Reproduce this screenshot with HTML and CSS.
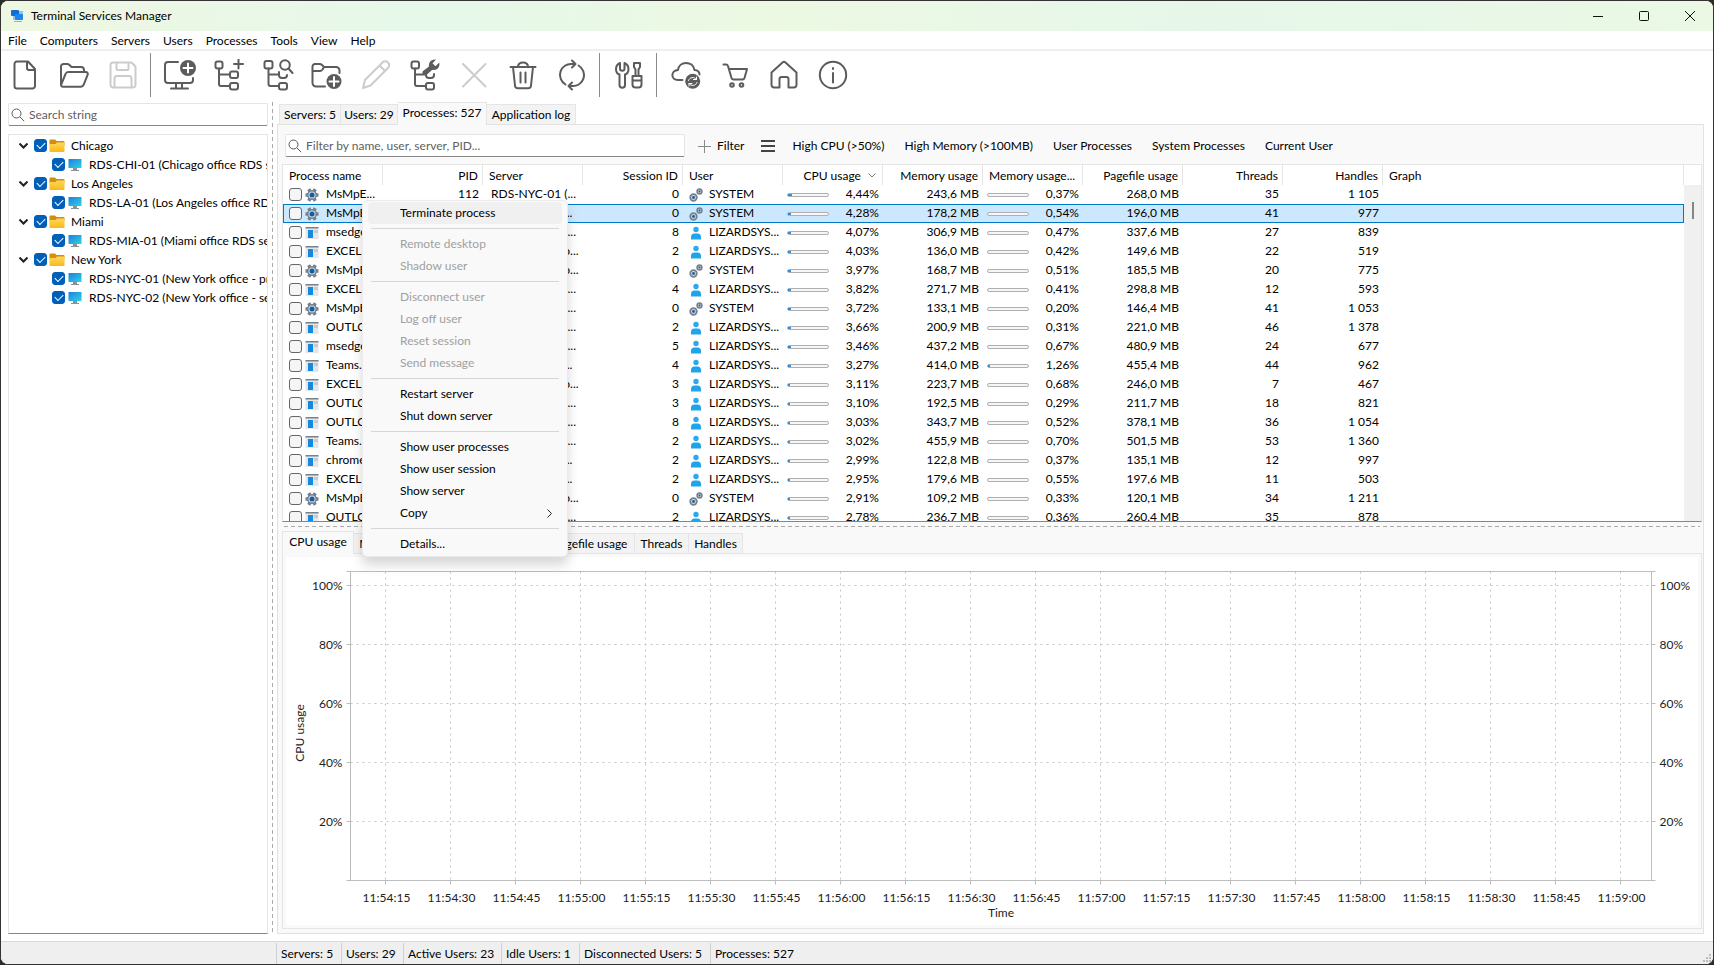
FILE: index.html
```html
<!DOCTYPE html>
<html lang="en">
<head>
    <meta charset="UTF-8">
    <meta name="viewport" content="width=device-width, initial-scale=1.0">
    <title>Terminal Services Manager</title>
    <link rel="stylesheet" href="styles.css">
</head>
<body>
    <svg class="sprite">
        <defs>
            <linearGradient id="screenFill" x1="0" y1="0" x2="1" y2="1">
                <stop offset="0" stop-color="#1f7fe0"/>
                <stop offset="1" stop-color="#2bd4e0"/>
            </linearGradient>
            <linearGradient id="folderFill" x1="0" y1="0" x2="0" y2="1">
                <stop offset="0" stop-color="#ffd75e"/>
                <stop offset="1" stop-color="#f9b916"/>
            </linearGradient>
        </defs>
        <symbol id="search" viewBox="0 0 14 14">
            <circle cx="5.5" cy="5.5" r="4.5"/>
            <path d="M9 9l4.2 4.2"/>
        </symbol>
        <symbol id="folder" viewBox="0 0 16 14">
            <path d="M.5 1.5A1 1 0 0 1 1.500.5h4.500l1.500 1.500h7a1 1 0 0 1 1 1V6H.5z" fill="#d08f0c"/>
            <path d="M.5 5h6L8 3.500h7.500V12a1 1 0 0 1-1 1h-13a1 1 0 0 1-1-1z" fill="url(#folderFill)"/>
        </symbol>
        <symbol id="screen" viewBox="0 0 14 14">
            <rect x=".5" y="1" width="13" height="9" rx=".5" fill="url(#screenFill)"/>
            <path d="M5 10h4v2h2v1H3v-1h2z" fill="#8a9299"/>
        </symbol>
        <symbol id="gear" viewBox="0 0 14 14">
            <g stroke="#76828e" stroke-width="3.500">
                <path d="M3.700 1.200l6.600 11.600M10.300 1.200L3.700 12.800M.5 7h13"/>
            </g>
            <circle cx="7" cy="7" r="5" fill="#76828e"/>
            <circle cx="7" cy="7" r="3.500" fill="#d5dbe1"/>
            <circle cx="7" cy="7" r="2.500" fill="#0f5ea8"/>
        </symbol>
        <symbol id="app" viewBox="0 0 14 14">
            <rect x=".5" y="1" width="13" height="12" fill="#e3e5e7"/>
            <rect x=".5" y="1" width="13" height="1.500" fill="#76828e"/>
            <rect x="3" y="4" width="5" height="8" fill="#1589e0"/>
            <rect x="9" y="4" width="4" height="3" fill="#c9cccf"/>
        </symbol>
        <symbol id="person" viewBox="0 0 14 14">
            <circle cx="7" cy="3.500" r="2.700" fill="#2ba9ee"/>
            <path d="M2 13.500V11a3.500 3.500 0 0 1 3.500-3.500h3A3.500 3.500 0 0 1 12 11v2.500z" fill="#1fa4ea"/>
        </symbol>
        <symbol id="gears" viewBox="0 0 14 14">
            <circle cx="4.500" cy="9.500" r="3.300" fill="#d5dbe1" stroke="#76828e" stroke-width="1.800"/>
            <circle cx="4.500" cy="9.500" r="1.400" fill="#0f5ea8"/>
            <circle cx="10.500" cy="3.500" r="2.400" fill="#d5dbe1" stroke="#76828e" stroke-width="1.600"/>
            <circle cx="10.500" cy="3.500" r="1" fill="#0f5ea8"/>
        </symbol>
    </svg>

    <div class="window">
        <header class="titlebar">
            <svg class="app-icon" viewBox="0 0 14 14">
                <rect x="3" y="2" width="10" height="9" fill="#8cc4f5"/>
                <rect x="1" y="1" width="8" height="6" rx="1" fill="#0f6fd0"/>
                <rect x="5" y="5" width="8" height="6" rx="1" fill="#1c86ea"/>
                <path d="M4 12h8v1H4z" fill="#a3abb3"/>
            </svg>
            <span class="caption">Terminal Services Manager</span>
            <div class="window-buttons">
                <button aria-label="Minimize"><svg viewBox="0 0 12 12"><path d="M1 6.500h10"/></svg></button>
                <button aria-label="Maximize"><svg viewBox="0 0 12 12"><rect x="1.500" y="1.500" width="9" height="9" rx="1"/></svg></button>
                <button aria-label="Close"><svg viewBox="0 0 12 12"><path d="M1 1l10 10M11 1L1 11"/></svg></button>
            </div>
        </header>

        <nav class="menubar">
            <button>File</button>
            <button>Computers</button>
            <button>Servers</button>
            <button>Users</button>
            <button>Processes</button>
            <button>Tools</button>
            <button>View</button>
            <button>Help</button>
        </nav>

        <div class="toolbar">
            <button aria-label="New"><svg viewBox="0 0 32 32"><path d="M8 2.500h11l7 7.500v17a2.500 2.500 0 0 1-2.500 2.500H8A2.500 2.500 0 0 1 5.500 27V5A2.500 2.500 0 0 1 8 2.500zM18 3v6a2 2 0 0 0 2 2h6"/></svg></button>
            <button aria-label="Open"><svg viewBox="0 0 32 32"><path d="M3 26V7.500A2.500 2.500 0 0 1 5.500 5H9q1.500 0 2.500 1l2 2h9.500a3 3 0 0 1 3 3v2M3 26l4.500-11a3 3 0 0 1 2.800-2h17.500a2 2 0 0 1 1.900 2.700l-4 10a3 3 0 0 1-2.800 2H5a2 2 0 0 1-2-1.700z"/></svg></button>
            <button aria-label="Save" disabled><svg viewBox="0 0 32 32"><path d="M6 3.500h18.500l4 4V26a2.500 2.500 0 0 1-2.500 2.500H6A2.500 2.500 0 0 1 3.500 26V6A2.500 2.500 0 0 1 6 3.500zM9.500 3.500v6A1.500 1.500 0 0 0 11 11h9a1.500 1.500 0 0 0 1.500-1.500v-6M7.500 28.500v-9A2.500 2.500 0 0 1 10 17h12a2.500 2.500 0 0 1 2.500 2.500v9"/></svg></button>
            <span class="separator"></span>
            <button aria-label="Add computer"><svg viewBox="0 0 32 32"><path d="M14 3H4a3 3 0 0 0-3 3v15a3 3 0 0 0 3 3h22a3 3 0 0 0 3-3v-2M12 24v5M18 24v5M7 29.500h17"/><circle class="solid" cx="24" cy="9" r="8"/><path class="knockout" d="M24 4.500v9M19.500 9h9"/></svg></button>
            <button aria-label="Add group"><svg viewBox="0 0 32 32"><rect x="2.500" y="2.500" width="7" height="7" rx="2"/><rect x="17" y="12.500" width="8" height="6.500" rx="2"/><rect x="17" y="24" width="8" height="6.500" rx="2"/><path d="M6 9.500V25a2 2 0 0 0 2 2h9M6 15.500h11M25.500.5v9M21 5h9"/></svg></button>
            <button aria-label="Find computers"><svg viewBox="0 0 32 32"><rect x="2.500" y="2" width="8" height="7.500" rx="2"/><path d="M17 13v3a3 3 0 0 0 3 3h2a3 3 0 0 0 3-3"/><rect x="17" y="24" width="8" height="6.500" rx="2"/><path d="M6.500 9.500V25a2 2 0 0 0 2 2H17M6.500 15.500H17"/><circle cx="23" cy="6" r="4.800"/><path d="M26.500 9.500l4 4.500"/></svg></button>
            <button aria-label="Add folder"><svg viewBox="0 0 32 32"><path d="M14 27.500H5a3.500 3.500 0 0 1-3.500-3.500V7.500A2.500 2.500 0 0 1 4 5h4.500q1.500 0 2.500 1l2 2h12a3.500 3.500 0 0 1 3.500 3.500V14M1.500 12H9q1.500 0 2.500-1.500L13 8"/><circle class="solid" cx="23" cy="22.500" r="7.500"/><path class="knockout" d="M23 18v9M18.500 22.500h9"/></svg></button>
            <button aria-label="Edit" disabled><svg viewBox="0 0 32 32"><path d="M3 29l2-8L22.500 3.500a3.800 3.800 0 0 1 5.500 5.500L10.500 26.500zM19.500 6.500l5.500 5.500"/></svg></button>
            <button aria-label="Configure group"><svg viewBox="0 0 32 32"><rect x="2.500" y="2.500" width="7.500" height="7" rx="2"/><path d="M17 14v2a3 3 0 0 0 3 3h2a3 3 0 0 0 3-3v-1"/><rect x="17" y="24" width="8" height="6.500" rx="2"/><path d="M6 9.500V25a2 2 0 0 0 2 2h9M6 15.500h11"/><path class="solid" d="M14 12l6-4.500c-.6-4 2-7.500 7-7L23.500 4.200l3 3L30.300 3.500c1 5-2.800 8.300-7 7.300L18 15.500c-2.500 2-6-1.500-4-3.500z"/></svg></button>
            <button aria-label="Cancel" disabled><svg viewBox="0 0 32 32"><path d="M5 5l22.500 22.500M27.500 5L5 27.500"/></svg></button>
            <button aria-label="Delete"><svg viewBox="0 0 32 32"><path d="M3.500 8h25M11 8q0-4.500 5-4.500T21 8M6 8l2 18.500a3 3 0 0 0 3 2.800h10a3 3 0 0 0 3-2.800L26 8M13.500 13.500v10M18.500 13.500v10"/></svg></button>
            <button aria-label="Refresh"><svg viewBox="0 0 32 32"><path d="M9.500 25.500A11 11 0 0 1 16 5h3.500M22.500 6.500A11 11 0 0 1 16 27h-3.500M16 1.500L19.500 5 16 8.500M16 23.500L12.500 27l3.500 3.500"/></svg></button>
            <span class="separator"></span>
            <button aria-label="Options"><svg viewBox="0 0 32 32"><path d="M7 4C1.500 6.500 2 14 6.500 15.500V26a2.500 2.500 0 0 0 5.500 0V15.500C16.500 14 17 6.500 11.500 4v5.500a2.200 2.200 0 0 1-4.500 0zM21 4h6v4l-1.500 2.500V17h-3v-6.500L21 8zM19.500 17h9v8.500a3 3 0 0 1-3 3h-3a3 3 0 0 1-3-3zM19.500 21.500h9"/></svg></button>
            <span class="separator"></span>
            <button aria-label="Check for updates"><svg viewBox="0 0 32 32"><path d="M12.500 21H8C.5 21 .5 11.500 8 11c1-9.500 15-9.500 16.500 0 3 .3 5 2 5 4.500"/><circle class="solid" cx="22.700" cy="22.300" r="7.500"/><path class="knockout thin" d="M18.500 21.500c1-3.500 6-4 8-1v-2.500M26.500 20.500h-3M27 23.500c-1 3.500-6 4-8 1V27M19 24.500h3"/></svg></button>
            <button aria-label="Buy"><svg viewBox="0 0 32 32"><path d="M4.500 5.500H7q1.500 0 2 1.500l3.500 12q.5 1.500 2 1.500h9q1.500 0 2-1.500l2.500-9H10"/><circle cx="13" cy="26" r="1.800"/><circle cx="22.500" cy="26" r="1.800"/></svg></button>
            <button aria-label="Home page"><svg viewBox="0 0 32 32"><path d="M3.500 13.500L14.500 3.500q1.500-1.500 3 0l11 10V26a2.500 2.500 0 0 1-2.500 2.500h-5.500V20a2 2 0 0 0-2-2h-5a2 2 0 0 0-2 2v8.500H6A2.500 2.500 0 0 1 3.500 26z"/></svg></button>
            <button aria-label="About"><svg viewBox="0 0 32 32"><circle cx="16" cy="16" r="13.200"/><path d="M16 14v9.500M16 9v1"/></svg></button>
        </div>

        <main class="workspace">
            <aside class="sidebar">
                <label class="searchbox">
                    <svg class="glyph"><use href="#search"/></svg>
                    <input type="text" placeholder="Search string" aria-label="Search string">
                </label>
                <ul class="tree" id="tree"></ul>
            </aside>

            <div class="splitter-v"></div>

            <section class="content">
                <div class="tabs">
                    <button class="tab tab-servers">Servers: 5</button>
                    <button class="tab tab-users">Users: 29</button>
                    <button class="tab tab-processes active">Processes: 527</button>
                    <button class="tab tab-log">Application log</button>
                </div>

                <div class="page">
                    <div class="filterbar">
                        <label class="searchbox filter">
                            <svg class="glyph"><use href="#search"/></svg>
                            <input type="text" placeholder="Filter by name, user, server, PID..." aria-label="Filter">
                        </label>
                        <button class="add-filter"><svg viewBox="0 0 13 13"><path d="M6.500 0v13M0 6.500h13"/></svg>Filter</button>
                        <button class="burger" aria-label="Filter list"><svg viewBox="0 0 14 12"><path d="M0 1h14M0 6h14M0 11h14"/></svg></button>
                        <button>High CPU (&gt;50%)</button>
                        <button>High Memory (&gt;100MB)</button>
                        <button>User Processes</button>
                        <button>System Processes</button>
                        <button>Current User</button>
                    </div>

                    <div class="list">
                        <table>
                            <thead>
                                <tr>
                                    <th>Process name</th>
                                    <th class="num">PID</th>
                                    <th>Server</th>
                                    <th class="num">Session ID</th>
                                    <th>User</th>
                                    <th class="num">CPU usage <svg class="sort" viewBox="0 0 8 5"><path d="M.5.5L4 4 7.500.5"/></svg></th>
                                    <th class="num">Memory usage</th>
                                    <th>Memory usage...</th>
                                    <th class="num">Pagefile usage</th>
                                    <th class="num">Threads</th>
                                    <th class="num">Handles</th>
                                    <th class="graph">Graph</th>
                                </tr>
                            </thead>
                            <tbody id="processes"></tbody>
                        </table>
                        <div class="scrollbar"><div class="thumb"></div></div>
                    </div>

                    <div class="splitter-h"></div>

                    <div class="tabs lower">
                        <button class="tab tab-cpu active">CPU usage</button>
                        <button class="tab tab-memory">Memory usage</button>
                        <button class="tab tab-percent">Memory usage, %</button>
                        <button class="tab tab-pagefile">Pagefile usage</button>
                        <button class="tab tab-threads">Threads</button>
                        <button class="tab tab-handles">Handles</button>
                    </div>
                    <div class="chart-page">
                        <svg class="chart" id="chart"></svg>
                    </div>
                </div>
            </section>
        </main>

        <footer class="statusbar">
            <span></span>
            <span>Servers: 5</span>
            <span>Users: 29</span>
            <span>Active Users: 23</span>
            <span>Idle Users: 1</span>
            <span>Disconnected Users: 5</span>
            <span>Processes: 527</span>
            <svg class="grip" viewBox="0 0 8 8"><path d="M6 0h2v2H6zM3 3h2v2H3zM6 3h2v2H6zM0 6h2v2H0zM3 6h2v2H3zM6 6h2v2H6z"/></svg>
        </footer>

        <div class="context-menu">
            <button class="hover">Terminate process</button>
            <hr>
            <button disabled>Remote desktop</button>
            <button disabled>Shadow user</button>
            <hr>
            <button disabled>Disconnect user</button>
            <button disabled>Log off user</button>
            <button disabled>Reset session</button>
            <button disabled>Send message</button>
            <hr>
            <button>Restart server</button>
            <button>Shut down server</button>
            <hr>
            <button>Show user processes</button>
            <button>Show user session</button>
            <button>Show server</button>
            <button>Copy <svg viewBox="0 0 5 9"><path d="M.5.5l4 4-4 4"/></svg></button>
            <hr>
            <button>Details...</button>
        </div>
    </div>

    <script src="script.js"></script>
</body>
</html>
```
FILE: styles.css
```css
* {
    box-sizing: border-box;
}
body {
    margin: 0;
    background: #2b2b2b;
    color: #000;
    font-family: Lato, "Open Sans", sans-serif;
    font-size: 12px;
    line-height: 16px;
}
button, input {
    font: inherit;
    color: inherit;
    margin: 0;
    padding: 0;
    border: none;
    background: none;
    white-space: nowrap;
}
svg {
    fill: none;
    stroke: none;
    flex: none;
}
.sprite {
    position: absolute;
    width: 0;
    height: 0;
}
.window {
    position: relative;
    display: flex;
    flex-direction: column;
    height: 100vh;
    border: 1px solid #333;
    border-radius: 8px;
    background: #fff;
    overflow: hidden;
}

/* title and menu */
.titlebar {
    display: flex;
    align-items: center;
    flex: none;
    height: 30px;
    padding-left: 9px;
    background: linear-gradient(90deg, #eef7e2, #e6f8ea 25%, #ecf8e2 45%, #e6f7ea 70%, #eaf8e4);
}
.app-icon {
    width: 14px;
    height: 14px;
}
.caption {
    margin-left: 7px;
}
.window-buttons {
    display: flex;
    margin-left: auto;
}
.window-buttons button {
    display: flex;
    align-items: center;
    justify-content: center;
    width: 46px;
    height: 30px;
}
.window-buttons svg {
    width: 12px;
    height: 12px;
    stroke: #111;
}
.menubar {
    display: flex;
    flex: none;
    height: 20px;
    padding-left: 7px;
    padding-top: 1px;
    gap: 13px;
    border-bottom: 2px solid #efefef;
}

/* toolbar */
.toolbar {
    display: flex;
    align-items: center;
    flex: none;
    height: 48px;
}
.toolbar button {
    display: flex;
    align-items: center;
    justify-content: center;
    width: 49px;
    height: 44px;
    padding-right: 2px;
}
.toolbar svg {
    width: 32px;
    height: 32px;
    stroke: #5c5c5c;
    stroke-width: 2;
    stroke-linecap: round;
    stroke-linejoin: round;
}
.toolbar button:disabled svg {
    stroke: #ccc;
}
.toolbar .solid {
    fill: #5c5c5c;
    stroke: none;
}
.toolbar .knockout {
    stroke: #fff;
}
.toolbar .thin {
    stroke-width: 1;
}
.toolbar .separator {
    width: 8px;
    height: 44px;
    background: linear-gradient(90deg, transparent 2px, #8a8a8a 2px, #8a8a8a 3px, transparent 3px);
}

/* left panel */
.workspace {
    display: flex;
    flex: 1;
    min-height: 0;
    padding: 3px 9px 6px 7px;
}
.sidebar {
    display: flex;
    flex-direction: column;
    flex: none;
    width: 260px;
    margin-bottom: 1px;
}
.searchbox {
    display: flex;
    align-items: center;
    flex: none;
    height: 23px;
    padding-left: 2px;
    margin-top: 1px;
    gap: 4px;
    border: 1px solid #e5e5e5;
    border-bottom-color: #868686;
    border-radius: 2px;
    background: #fff;
}
.searchbox input {
    flex: 1;
    min-width: 0;
    outline: none;
}
.searchbox input::placeholder {
    color: #5f5f5f;
}
.glyph {
    width: 14px;
    height: 14px;
    stroke: #5c5c5c;
}
.tree {
    flex: 1;
    margin: 8px 0 0;
    padding: 1px 0 0 10px;
    list-style: none;
    overflow: hidden;
    border: 1px solid #e5e5e5;
    border-bottom-color: #868686;
}
.tree ul {
    margin: 0;
    padding: 0 0 0 33px;
    list-style: none;
}
.tree label {
    display: flex;
    align-items: center;
    height: 19px;
    white-space: nowrap;
}
.tree .chevron {
    width: 9px;
    height: 6px;
    margin-right: 6px;
    stroke: #222;
    stroke-width: 2;
}
.tree .folder {
    width: 16px;
    height: 14px;
    margin: 0 6px 0 2px;
}
.tree .screen {
    width: 14px;
    height: 14px;
    margin: 0 7px 0 3px;
}
input[type=checkbox] {
    appearance: none;
    position: relative;
    flex: none;
    width: 13px;
    height: 13px;
    border: 1px solid #666;
    border-radius: 3px;
    background: #f5f5f5;
}
input[type=checkbox]:checked {
    border-color: #005fb8;
    background: #005fb8;
}
input[type=checkbox]:checked::after {
    content: "";
    position: absolute;
    left: 2px;
    top: 2px;
    width: 7px;
    height: 4px;
    border-left: 1px solid #fff;
    border-bottom: 1px solid #fff;
    transform: rotate(-45deg);
}
.splitter-v {
    flex: none;
    width: 1px;
    margin: 0 4px;
    background: repeating-linear-gradient(#aaa 0 4px, transparent 4px 7px);
}

/* right panel */
.content {
    display: flex;
    flex-direction: column;
    flex: 1;
    min-width: 0;
    margin-bottom: 1px;
}
.tabs {
    display: flex;
    align-items: flex-end;
    flex: none;
    height: 22px;
    padding-left: 2px;
}
.tab {
    height: 20px;
    border: 1px solid #e5e5e5;
    border-left: none;
    border-bottom: none;
    background: #f3f3f3;
    overflow: hidden;
}
.tab:first-child {
    border-left: 1px solid #e5e5e5;
}
.tab.active {
    position: relative;
    height: 23px;
    padding-bottom: 3px;
    margin-bottom: -1px;
    background: #f9f9f9;
}
.tab-servers { width: 62px; }
.tab-users { width: 57px; }
.tab-processes { width: 89px; }
.tab-log { width: 89px; }
.page {
    display: flex;
    flex-direction: column;
    flex: 1;
    min-height: 0;
    padding: 9px 1px 4px 4px;
    border: 1px solid #e2e2e2;
    background: #f9f9f9;
}
.filterbar {
    display: flex;
    align-items: center;
    flex: none;
    height: 23px;
    margin-left: 3px;
    margin-bottom: 7px;
}
.filterbar button {
    padding-top: 1px;
    margin-right: 20px;
}
.filter {
    width: 400px;
    margin-top: 0;
    margin-right: 13px;
}
.filterbar .add-filter {
    display: flex;
    align-items: center;
    gap: 6px;
    margin-right: 17px;
}
.filterbar .burger {
    display: flex;
    margin-right: 17px;
}
.add-filter svg {
    width: 13px;
    height: 13px;
    stroke: #8a8a8a;
}
.burger svg {
    width: 14px;
    height: 12px;
    stroke: #444;
    stroke-width: 2;
}

/* process list */
.list {
    position: relative;
    flex: 0 0 37.1vh;
    overflow: hidden;
    padding-right: 17px;
    border: 1px solid #e5e5e5;
    border-bottom-color: #868686;
    background: #fff;
}
table {
    width: 100%;
    table-layout: fixed;
    border-collapse: collapse;
}
th, td {
    height: 19px;
    line-height: 17px;
    padding: 0 4px 0 8px;
    text-align: left;
    vertical-align: top;
    font-weight: normal;
    white-space: nowrap;
    overflow: hidden;
}
th {
    width: 100px;
    height: 20px;
    padding: 2px 5px 0 6px;
    background: linear-gradient(#e5e5e5, #e5e5e5) right / 1px 100% no-repeat;
}
th.graph {
    width: auto;
}
.num {
    text-align: right;
}
.sort {
    width: 8px;
    height: 5px;
    margin: 0 2px 2px 4px;
    stroke: #777;
}
.cell {
    display: flex;
    align-items: center;
    height: 19px;
    gap: 7px;
}
.cell span {
    height: 19px;
}
td.name, td.user {
    padding-left: 6px;
    padding-right: 0;
}
td.user .cell {
    gap: 6px;
}
.name input {
    margin-right: -4px;
}
.cell svg {
    width: 14px;
    height: 14px;
}
.cell .bar {
    width: 42px;
    height: 4px;
    margin-left: -4px;
    margin-right: auto;
    border: 1px solid #b0b0b0;
    border-radius: 2px;
    background: #f6f6f6;
}
.bar i {
    display: block;
    height: 2px;
    background: #2f8fdc;
}
.selected {
    background: #cce8ff;
    outline: 1px solid #0078c8;
    outline-offset: -1px;
}
.scrollbar {
    position: absolute;
    top: 20px;
    right: 0;
    bottom: 0;
    width: 17px;
    background: #f0f0f0;
}
.thumb {
    width: 2px;
    height: 17px;
    margin: 17px 0 0 8px;
    background: #868686;
}

/* chart panel */
.splitter-h {
    flex: none;
    height: 1px;
    margin: 4px 2px;
    background: repeating-linear-gradient(90deg, #aaa 0 4px, transparent 4px 7px);
}
.lower {
    padding-left: 0;
}
.tab-cpu { width: 72px; }
.tab-memory { width: 89px; }
.tab-percent { width: 103px; }
.tab-pagefile { width: 89px; }
.tab-threads { width: 54px; }
.tab-handles { width: 54px; }
.chart-page {
    flex: 1;
    min-height: 0;
    padding: 3px;
    border: 1px solid #e5e5e5;
}
.chart {
    display: block;
    width: 100%;
    height: 100%;
    background: #fff;
}
.chart text {
    fill: #222;
}
.chart .axis {
    stroke: #bdbdbd;
}
.chart .grid {
    stroke: #c4c4c4;
    stroke-dasharray: 2 4;
}

/* status bar */
.statusbar {
    display: grid;
    grid-template-columns: 275px 65px 62px 98px 78px 131px 1fr 8px;
    flex: none;
    height: 23px;
    padding-right: 2px;
    border-top: 1px solid #d9d9d9;
    background: #efefef;
}
.statusbar span {
    padding-left: 4px;
    margin-top: 1px;
    line-height: 21px;
    white-space: nowrap;
    border-left: 1px solid #d0d0d0;
}
.statusbar span:first-child {
    border: none;
}
.grip {
    width: 8px;
    height: 8px;
    align-self: end;
    margin-bottom: 2px;
    fill: #bbb;
}

/* popup over the process list */
.context-menu {
    position: absolute;
    left: 361px;
    top: 199px;
    width: 206px;
    padding: 1px 5px;
    border: 1px solid #ebebeb;
    border-radius: 5px;
    background: #f9f9f9;
    box-shadow: 0 8px 12px rgba(0, 0, 0, 0.16);
}
.context-menu button {
    display: flex;
    align-items: center;
    justify-content: space-between;
    width: 100%;
    height: 22px;
    padding: 0 10px 0 32px;
    border-radius: 4px;
}
.context-menu button:disabled {
    color: #a0a0a0;
}
.context-menu .hover {
    background: #f0f0f0;
}
.context-menu hr {
    height: 1px;
    margin: 4px 3px;
    border: none;
    background: #d6d6d6;
}
.context-menu svg {
    width: 5px;
    height: 9px;
    stroke: #222;
}
```
FILE: script.js
```js
const groups = [
    ["Chicago", ["RDS-CHI-01 (Chicago office RDS server)"]],
    ["Los Angeles", ["RDS-LA-01 (Los Angeles office RDS server)"]],
    ["Miami", ["RDS-MIA-01 (Miami office RDS server)"]],
    ["New York", ["RDS-NYC-01 (New York office - primary)", "RDS-NYC-02 (New York office - secondary)"]]
];

// name, pid, server, session, cpu, memory, memory %, pagefile, threads, handles
const processes = [
    ["MsMpE...", 112, "RDS-NYC-01 (...", 0, "4,44", "243,6", "0,37", "268,0", 35, "1 105"],
    ["MsMpE...", 2380, "RDS-CHI-01 (...", 0, "4,28", "178,2", "0,54", "196,0", 41, "977"],
    ["msedge...", 7412, "RDS-NYC-01 (...", 8, "4,07", "306,9", "0,47", "337,6", 27, "839"],
    ["EXCEL...", 5108, "RDS-LA-01 (Lo...", 2, "4,03", "136,0", "0,42", "149,6", 22, "519"],
    ["MsMpE...", 3364, "RDS-LA-01 (Lo...", 0, "3,97", "168,7", "0,51", "185,5", 20, "775"],
    ["EXCEL...", 9020, "RDS-NYC-02 (...", 4, "3,82", "271,7", "0,41", "298,8", 12, "593"],
    ["MsMpE...", 2944, "RDS-NYC-02 (...", 0, "3,72", "133,1", "0,20", "146,4", 41, "1 053"],
    ["OUTLO...", 6632, "RDS-NYC-01 (...", 2, "3,66", "200,9", "0,31", "221,0", 46, "1 378"],
    ["msedge...", 8216, "RDS-NYC-01 (...", 5, "3,46", "437,2", "0,67", "480,9", 24, "677"],
    ["Teams...", 4480, "RDS-CHI-01 (...", 4, "3,27", "414,0", "1,26", "455,4", 44, "962"],
    ["EXCEL...", 7796, "RDS-LA-01 (Lo...", 3, "3,11", "223,7", "0,68", "246,0", 7, "467"],
    ["OUTLO...", 5924, "RDS-NYC-02 (...", 3, "3,10", "192,5", "0,29", "211,7", 18, "821"],
    ["OUTLO...", 10248, "RDS-NYC-02 (...", 8, "3,03", "343,7", "0,52", "378,1", 36, "1 054"],
    ["Teams...", 6180, "RDS-NYC-01 (...", 2, "3,02", "455,9", "0,70", "501,5", 53, "1 360"],
    ["chrome...", 3872, "RDS-CHI-01 (...", 2, "2,99", "122,8", "0,37", "135,1", 12, "997"],
    ["EXCEL...", 4756, "RDS-CHI-01 (...", 2, "2,95", "179,6", "0,55", "197,6", 11, "503"],
    ["MsMpE...", 3120, "RDS-LA-01 (Lo...", 0, "2,91", "109,2", "0,33", "120,1", 34, "1 211"],
    ["OUTLO...", 8844, "RDS-NYC-02 (...", 2, "2,78", "236,7", "0,36", "260,4", 35, "878"]
];

document.getElementById("tree").innerHTML = groups.map(([name, servers]) => `
    <li>
        <label>
            <svg class="chevron" viewBox="0 0 9 6"><path d="M.5.5l4 4 4-4"/></svg>
            <input type="checkbox" checked>
            <svg class="folder"><use href="#folder"/></svg>${name}
        </label>
        <ul>${servers.map(server => `
            <li><label><input type="checkbox" checked><svg class="screen"><use href="#screen"/></svg>${server}</label></li>`).join("")}
        </ul>
    </li>`).join("");

function bar(value) {
    // 40px inside the frame, anything below one percent stays empty
    const percent = parseFloat(value.replace(",", "."));
    const width = percent < 1 ? 0 : Math.max(2, Math.round(percent * 0.8));
    return `<span class="bar"><i style="width: ${width}px"></i></span>`;
}

document.getElementById("processes").innerHTML = processes.map((p, index) => {
    const system = p[3] === 0;
    return `
    <tr class="${index === 1 ? "selected" : ""}">
        <td class="name"><div class="cell"><input type="checkbox" aria-label="Select ${p[0]}"><svg><use href="#${system ? "gear" : "app"}"/></svg><span>${p[0]}</span></div></td>
        <td class="num">${p[1]}</td>
        <td>${p[2]}</td>
        <td class="num">${p[3]}</td>
        <td class="user"><div class="cell"><svg><use href="#${system ? "gears" : "person"}"/></svg><span>${system ? "SYSTEM" : "LIZARDSYS..."}</span></div></td>
        <td><div class="cell">${bar(p[4])}<span>${p[4]}%</span></div></td>
        <td class="num">${p[5]} MB</td>
        <td><div class="cell">${bar(p[6])}<span>${p[6]}%</span></div></td>
        <td class="num">${p[7]} MB</td>
        <td class="num">${p[8]}</td>
        <td class="num">${p[9]}</td>
        <td></td>
    </tr>`;
}).join("");

function drawChart() {
    const chart = document.getElementById("chart");
    const width = chart.clientWidth;
    const height = chart.clientHeight;
    const left = 64.5, top = 14.5;
    const right = width - 46.5, bottom = height - 44.5;
    let out = "";

    const line = (cls, x1, y1, x2, y2) => {
        out += `<line class="${cls}" x1="${x1}" y1="${y1}" x2="${x2}" y2="${y2}"/>`;
    };
    const text = (x, y, anchor, value, extra = "") => {
        out += `<text x="${x}" y="${y}" text-anchor="${anchor}" ${extra}>${value}</text>`;
    };

    // the axis runs a little over 100 percent
    const step = (bottom - top) / 5.24;
    for (let i = 1; i <= 5; i++) {
        const y = Math.floor(bottom - i * step) + 0.5;
        line("grid", left, y, right, y);
        line("axis", left - 4, y, left, y);
        line("axis", right, y, right + 4, y);
        text(left - 8, y + 4, "end", i * 20 + "%");
        text(right + 8, y + 4, "start", i * 20 + "%");
    }

    const gap = (right - left) / 20;
    for (let i = 0; i < 20; i++) {
        const x = Math.round(left + 34 + i * gap) + 0.5;
        const seconds = 54 * 60 + 15 + i * 15;
        const mm = String(Math.floor(seconds / 60)).padStart(2, "0");
        const ss = String(seconds % 60).padStart(2, "0");
        line("grid", x, top, x, bottom);
        line("axis", x, bottom, x, bottom + 4);
        text(x + 1, bottom + 21, "middle", `11:${mm}:${ss}`);
    }

    line("axis", left - 4, top, right + 4, top);
    line("axis", left - 4, bottom, right + 4, bottom);
    line("axis", left, top, left, bottom);
    line("axis", right, top, right, bottom);

    text((left + right) / 2, bottom + 36, "middle", "Time");
    const middle = (top + bottom) / 2 + 7;
    text(18, middle, "middle", "CPU usage", `transform="rotate(-90 18 ${middle})"`);
    chart.innerHTML = out;
}

drawChart();
window.addEventListener("resize", drawChart);
```
